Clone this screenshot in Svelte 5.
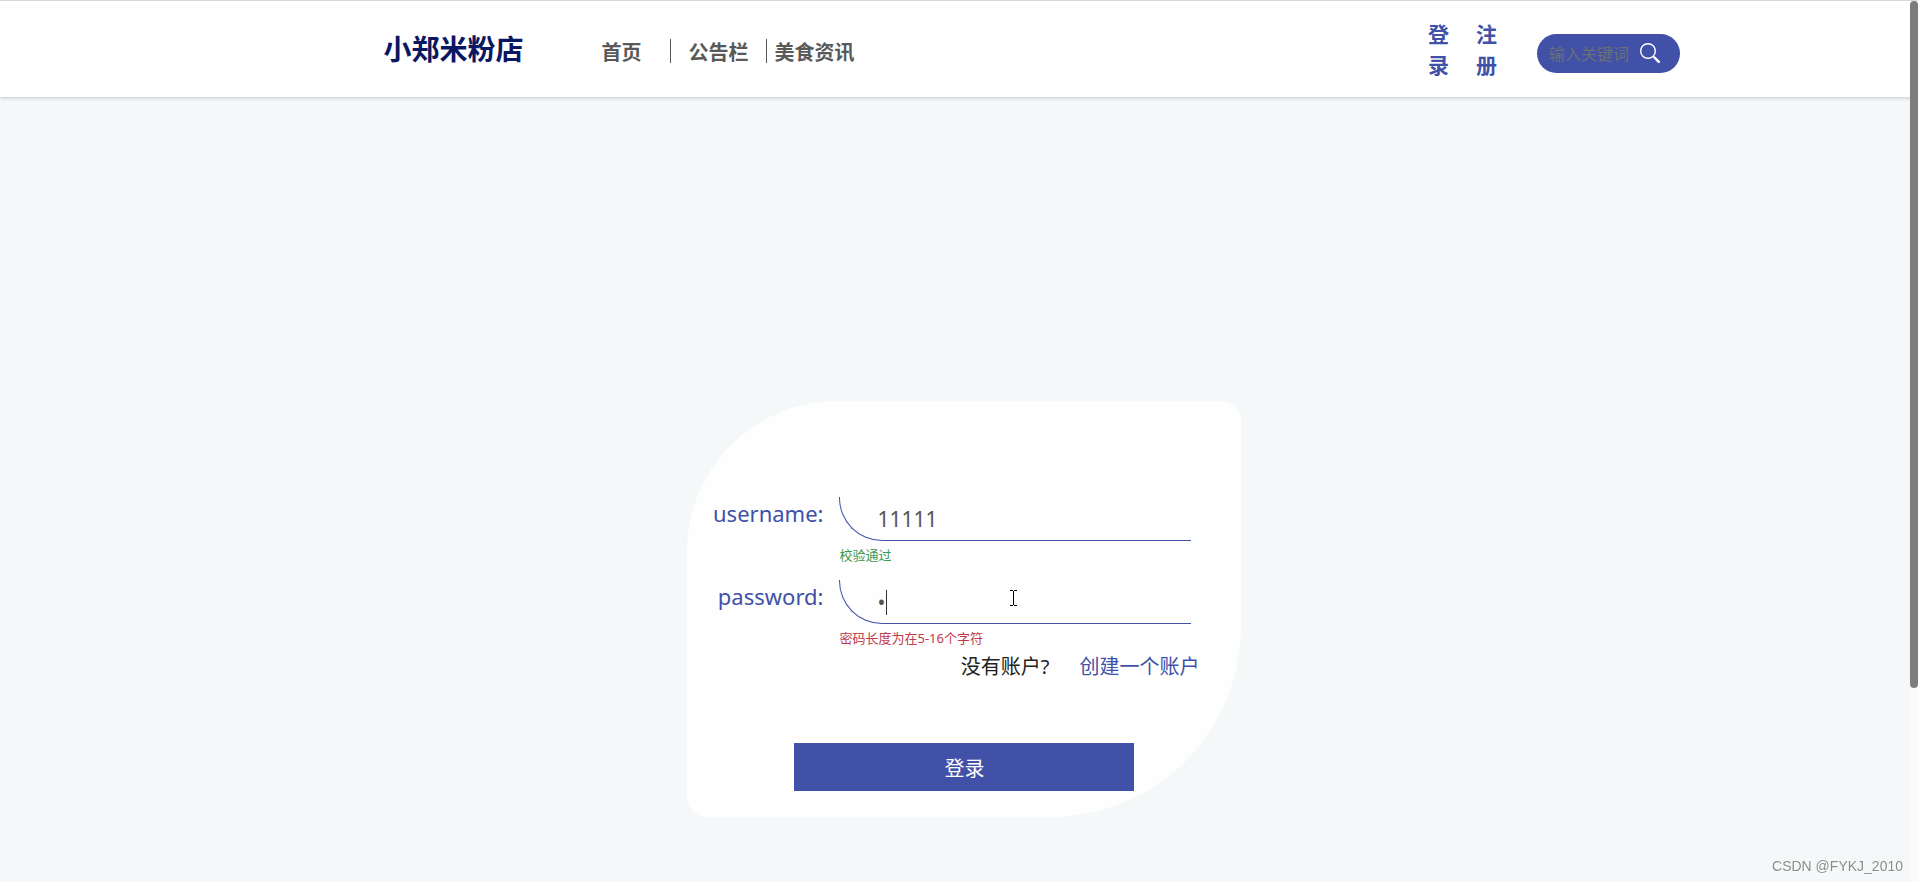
<script>
  let username = $state('11111')
  let password = $state('1')
  let keyword = $state('')

  const links = [
    { text: '首页', name: 'home' },
    { text: '公告栏', name: 'notice' },
    { text: '美食资讯', name: 'news' }
  ]

  let userMsg = $derived(username.length >= 5 ? '校验通过' : '用户名长度为在5-16个字符')
  let passMsg = $derived(password.length >= 5 ? '校验通过' : '密码长度为在5-16个字符')

  function submit(e) {
    e.preventDefault()
  }
</script>

<div class="page">
  <header class="header">
    <div class="header-inner">
      <a class="brand" href="#/">小郑米粉店</a>
      <nav class="nav">
        {#each links as link}
          <a class={link.name} href="#/{link.name}">{link.text}</a>
        {/each}
      </nav>
      <div class="account">
        <a href="#/login">登录</a>
        <a href="#/register">注册</a>
      </div>
      <form class="search" onsubmit={submit}>
        <input type="text" aria-label="搜索" placeholder="输入关键词" bind:value={keyword} />
        <button type="submit" aria-label="搜索">
          <svg viewBox="0 0 20 20" width="20" height="20" fill="none" stroke="#fff">
            <circle cx="8" cy="8" r="7.3" stroke-width="1.4" />
            <path d="M13.2 13.2l1.5 1.5" stroke-width="1.4" />
            <path d="M14.6 14.6l4.2 4.2" stroke-width="2.4" stroke-linecap="round" />
          </svg>
        </button>
      </form>
    </div>
  </header>

  <main>
    <form class="card" onsubmit={submit}>
      <div class="item">
        <label for="username">username:</label>
        <div class="control">
          <input id="username" type="text" bind:value={username} />
          <p class="msg" class:ok={username.length >= 5}>{userMsg}</p>
        </div>
      </div>
      <div class="item">
        <label for="password">password:</label>
        <div class="control">
          <input id="password" type="password" bind:value={password} />
          <span class="caret"></span>
          <svg class="pointer" viewBox="0 0 7 16" width="7" height="16" fill="none" stroke="#000">
            <path d="M0 .5h3M4 .5h3M3.5 1v14M0 15.5h3M4 15.5h3" />
          </svg>
          <p class="msg" class:ok={password.length >= 5}>{passMsg}</p>
        </div>
      </div>
      <div class="signup">
        <span>没有账户?</span>
        <a href="#/register">创建一个账户</a>
      </div>
      <button class="submit" type="submit">登录</button>
    </form>
  </main>

  <div class="scrollbar"><div class="thumb"></div></div>
  <span class="watermark">CSDN @FYKJ_2010</span>
</div>

<style>
  :global(*, *::before, *::after) {
    box-sizing: border-box;
    margin: 0;
    padding: 0;
  }

  :global(body) {
    background: #f4f8f9;
    font-family: 'Noto Sans', 'Noto Sans CJK SC', sans-serif;
  }

  .page {
    min-height: 100vh;
  }

  a {
    text-decoration: none;
  }

  input,
  button {
    font-family: inherit;
    border: none;
    outline: none;
    background: transparent;
  }

  .header {
    background: #fff;
    border-top: 1px solid #d9d9d9;
    box-shadow: 0 1px 4px rgba(0, 0, 0, 0.2);
  }

  .header-inner {
    display: flex;
    align-items: center;
    height: 96px;
    margin: 0 238px 0 20%;
    padding-top: 4px;
  }

  .brand {
    color: #0a1763;
    font-size: 28px;
    font-weight: 700;
    line-height: 40px;
    padding-bottom: 4px;
    white-space: nowrap;
  }

  .nav {
    display: flex;
    align-items: center;
    margin-left: 78px;
  }

  .nav a {
    color: #595959;
    font-size: 20px;
    font-weight: 700;
    line-height: 20px;
    padding-top: 4px;
    white-space: nowrap;
  }

  .nav .home {
    padding-right: 28px;
  }

  .nav .notice {
    padding-left: 18px;
    padding-right: 17px;
    border-left: 1px solid #555;
    border-right: 1px solid #555;
  }

  .nav .news {
    padding-left: 8px;
  }

  .account {
    display: flex;
    gap: 27px;
    margin-left: auto;
    margin-right: 40px;
  }

  .account a {
    width: 21px;
    color: #4051a7;
    font-size: 21px;
    font-weight: 700;
    line-height: 31px;
    padding-bottom: 2px;
  }

  .search {
    display: flex;
    align-items: center;
    width: 143px;
    height: 39px;
    margin-top: 4px;
    padding-left: 12px;
    border-radius: 20px;
    background: #4051a7;
  }

  .search input {
    width: 91px;
    padding-top: 2px;
    color: #fff;
    font-size: 16px;
  }

  .search input::placeholder {
    color: #6b6f78;
    opacity: 1;
  }

  .search button {
    display: flex;
    cursor: pointer;
  }

  main {
    padding-top: 304px;
    padding-left: calc(36% - 3px);
  }

  .card {
    width: 554px;
    padding: 96px 42px 26px 0;
    border-radius: 150px 20px 190px 20px;
    background: #fefefe;
  }

  .item {
    display: flex;
    gap: 16px;
    height: 83px;
  }

  .item label {
    width: 136px;
    color: #4051a7;
    font-size: 22px;
    line-height: 32px;
    text-align: right;
  }

  .control {
    position: relative;
    width: 352px;
  }

  .control input {
    display: block;
    width: 100%;
    height: 44px;
    padding-left: 37px;
    border-left: 1px solid #4051a7;
    border-bottom: 1px solid #4051a7;
    border-radius: 0 0 0 43px;
    color: #555;
    font-size: 21px;
  }

  .caret {
    position: absolute;
    left: 47px;
    top: 10px;
    width: 1px;
    height: 25px;
    background: #333;
  }

  .pointer {
    position: absolute;
    left: 171px;
    top: 10px;
  }

  .msg {
    margin-top: 5px;
    color: #c0394b;
    font-size: 13px;
    line-height: 18px;
  }

  .msg.ok {
    color: #3a9a50;
  }

  .signup {
    display: flex;
    justify-content: flex-end;
    gap: 30px;
    color: #222;
    font-size: 20px;
    line-height: 28px;
    margin-top: -10px;
  }

  .signup a {
    color: #4051a7;
  }

  .submit {
    display: block;
    width: 340px;
    height: 48px;
    margin: 62px 0 0 107px;
    background: #4051a7;
    color: #fff;
    font-size: 20px;
    cursor: pointer;
  }

  .scrollbar {
    position: fixed;
    top: 1px;
    right: 0;
    bottom: 0;
    width: 8px;
    background: #fafafa;
  }

  .thumb {
    height: 78%;
    border-radius: 4px;
    background: #7d7d7d;
  }

  .watermark {
    position: fixed;
    right: 15px;
    bottom: 8px;
    color: #8c8c8c;
    font-family: 'Liberation Sans', sans-serif;
    font-size: 14px;
    line-height: 16px;
    text-shadow: 1px 1px 0 #fff;
  }
</style>
